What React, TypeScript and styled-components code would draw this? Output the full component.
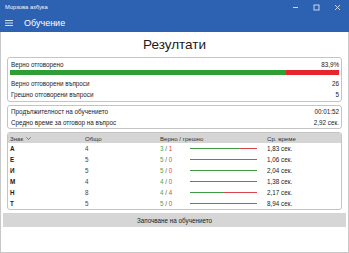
import React from 'react';
import styled, { createGlobalStyle } from 'styled-components';

const cl = {
  accent: '#2d62b3',
  text: '#222',
  muted: '#444',
  border: '#c4c4c4',
  frame: '#c8c8c8',
  headerBg: '#d5d5d5',
  buttonBg: '#d6d6d6',
  green: '#2f9e35',
  red: '#e6262e',
  barGreen: '#3c9b45',
  barRed: '#d9434e',
  numGreen: '#45a84b',
  numRed: '#ef3b3b',
};

interface LetterStat {
  sign: string;
  total: number;
  correct: number;
  wrong: number;
  time: string;
}

const stats: LetterStat[] = [
  { sign: 'А', total: 4, correct: 3, wrong: 1, time: '1,83 сек.' },
  { sign: 'Е', total: 5, correct: 5, wrong: 0, time: '1,06 сек.' },
  { sign: 'И', total: 5, correct: 5, wrong: 0, time: '2,04 сек.' },
  { sign: 'М', total: 4, correct: 4, wrong: 0, time: '1,38 сек.' },
  { sign: 'Н', total: 8, correct: 4, wrong: 4, time: '2,17 сек.' },
  { sign: 'Т', total: 5, correct: 5, wrong: 0, time: '8,94 сек.' },
];

const GlobalStyle = createGlobalStyle`
  html, body {
    margin: 0;
    padding: 0;
    background: #fff;
  }
  body {
    font-family: "Liberation Sans", Arial, sans-serif;
    color: ${cl.text};
  }
  * {
    box-sizing: border-box;
  }
`;

const App = () => {
  return (
    <>
      <GlobalStyle />
      <Window>
        <TitleBar>
          <CaptionRow>
            <AppName>Морзова азбука</AppName>
            <Controls>
              <ControlIcon width="7" height="7" viewBox="0 0 7 7">
                <line x1="1" y1="3.5" x2="6" y2="3.5" />
              </ControlIcon>
              <ControlIcon width="7" height="7" viewBox="0 0 7 7">
                <rect x="1" y="1" width="5" height="5" />
              </ControlIcon>
              <ControlIcon width="7" height="7" viewBox="0 0 7 7">
                <path d="M1 1 L6 6 M6 1 L1 6" />
              </ControlIcon>
            </Controls>
          </CaptionRow>
          <HeaderRow>
            <Hamburger width="8" height="6" viewBox="0 0 8 6">
              <path d="M0 0.5 H8 M0 3 H8 M0 5.5 H8" />
            </Hamburger>
            <PageTitle>Обучение</PageTitle>
          </HeaderRow>
        </TitleBar>

        <Content>
          <Heading>Резултати</Heading>

          <Card>
            <Row>
              <span>Верно отговорено</span>
              <span>83,9%</span>
            </Row>
            <Progress>
              <ProgressPart color={cl.green} style={{ width: '83.9%' }} />
              <ProgressPart color={cl.red} style={{ width: '16.1%' }} />
            </Progress>
            <Row gapTop>
              <span>Верно отговорени въпроси</span>
              <span>26</span>
            </Row>
            <Row>
              <span>Грешно отговорени въпроси</span>
              <span>5</span>
            </Row>
          </Card>

          <Card compact>
            <Row>
              <span>Продължителност на обучението</span>
              <span>00:01:52</span>
            </Row>
            <Row>
              <span>Средно време за отговор на въпрос</span>
              <span>2,92 сек.</span>
            </Row>
          </Card>

          <TableCard>
            <TableHeader>
              <HeadCell>
                Знак
                <Chevron width="5" height="3" viewBox="0 0 5 3">
                  <path d="M0.3 0.3 L2.5 2.5 L4.7 0.3" />
                </Chevron>
              </HeadCell>
              <HeadCell>Общо</HeadCell>
              <HeadCell>Верно / грешно</HeadCell>
              <HeadCell>Ср. време</HeadCell>
            </TableHeader>
            {stats.map((s) => (
              <TableRow key={s.sign}>
                <Sign>{s.sign}</Sign>
                <Total>{s.total}</Total>
                <Ratio>
                  <RatioText>
                    <Num color={cl.numGreen}>{s.correct}</Num>
                    {' / '}
                    <Num color={cl.numRed}>{s.wrong}</Num>
                  </RatioText>
                  <MiniBar>
                    <ProgressPart
                      color={cl.barGreen}
                      style={{ width: `${(s.correct / s.total) * 100}%` }}
                    />
                    <ProgressPart
                      color={cl.barRed}
                      style={{ width: `${(s.wrong / s.total) * 100}%` }}
                    />
                  </MiniBar>
                </Ratio>
                <span>{s.time}</span>
              </TableRow>
            ))}
          </TableCard>

          <StartButton>Започване на обучението</StartButton>
        </Content>
      </Window>
    </>
  );
};

const Window = styled.div`
  width: 349px;
  height: 253px;
  display: flex;
  flex-direction: column;
  overflow: hidden;
`;

const TitleBar = styled.div`
  background: ${cl.accent};
  color: #fff;
  height: 32px;
  display: flex;
  flex-direction: column;
`;

const CaptionRow = styled.div`
  height: 14px;
  display: flex;
  align-items: center;
  padding-left: 5px;
`;

const AppName = styled.div`
  font-size: 5.8px;
  color: #f2f5fb;
`;

const Controls = styled.div`
  margin-left: auto;
  display: flex;
  gap: 14px;
  padding-right: 8px;
`;

const ControlIcon = styled.svg`
  fill: none;
  stroke: #d9e3f3;
  stroke-width: 0.9;
`;

const HeaderRow = styled.div`
  height: 18px;
  display: flex;
  align-items: center;
  padding-left: 5px;
`;

const Hamburger = styled.svg`
  fill: none;
  stroke: #e4ebf7;
  stroke-width: 0.9;
  margin-right: 11px;
`;

const PageTitle = styled.div`
  font-size: 9px;
  color: #fff;
`;

const Content = styled.div`
  flex: 1;
  border: 1px solid ${cl.frame};
  border-top: none;
  padding: 0 6px;
  display: flex;
  flex-direction: column;
`;

const Heading = styled.div`
  font-size: 13.5px;
  text-align: center;
  line-height: 24px;
  margin-top: 1px;
  color: #1a1a1a;
`;

const Card = styled.div<{ compact?: boolean }>`
  border: 1px solid ${cl.border};
  border-radius: 3px;
  padding: ${(p) => (p.compact ? '0 2px 0 3px' : '1px 2px 1px 3px')};
  margin-bottom: 3px;
`;

const Row = styled.div<{ gapTop?: boolean }>`
  display: flex;
  justify-content: space-between;
  align-items: center;
  font-size: 6.3px;
  height: 11px;
  margin-top: ${(p) => (p.gapTop ? '3px' : '0')};
`;

const Progress = styled.div`
  display: flex;
  height: 5px;
  margin-left: -1px;
`;

const ProgressPart = styled.div<{ color: string }>`
  height: 100%;
  background: ${(p) => p.color};
`;

const TableCard = styled.div`
  border: 1px solid ${cl.border};
  border-radius: 3px;
  overflow: hidden;
`;

const columns = '75px 75px 107px 1fr';

const TableHeader = styled.div`
  display: grid;
  grid-template-columns: ${columns};
  align-items: center;
  height: 10px;
  background: ${cl.headerBg};
  padding-left: 2px;
  font-size: 6.1px;
  color: #333;
`;

const HeadCell = styled.div`
  display: flex;
  align-items: center;
  gap: 3px;
`;

const Chevron = styled.svg`
  fill: none;
  stroke: #555;
  stroke-width: 0.7;
`;

const TableRow = styled.div`
  display: grid;
  grid-template-columns: ${columns};
  align-items: center;
  height: 11px;
  padding-left: 2px;
  font-size: 6.3px;
`;

const Sign = styled.span`
  font-weight: bold;
  color: #1a1a1a;
`;

const Total = styled.span`
  color: ${cl.muted};
`;

const Ratio = styled.div`
  display: flex;
  align-items: center;
`;

const RatioText = styled.span`
  width: 30px;
  color: #555;
`;

const Num = styled.span<{ color: string }>`
  color: ${(p) => p.color};
`;

const MiniBar = styled.div`
  display: flex;
  width: 67px;
  height: 1.5px;
`;

const StartButton = styled.div`
  margin: 3px -4px 0;
  height: 14px;
  background: ${cl.buttonBg};
  display: flex;
  align-items: center;
  justify-content: center;
  font-size: 6.3px;
  color: #222;
`;

export default App;
